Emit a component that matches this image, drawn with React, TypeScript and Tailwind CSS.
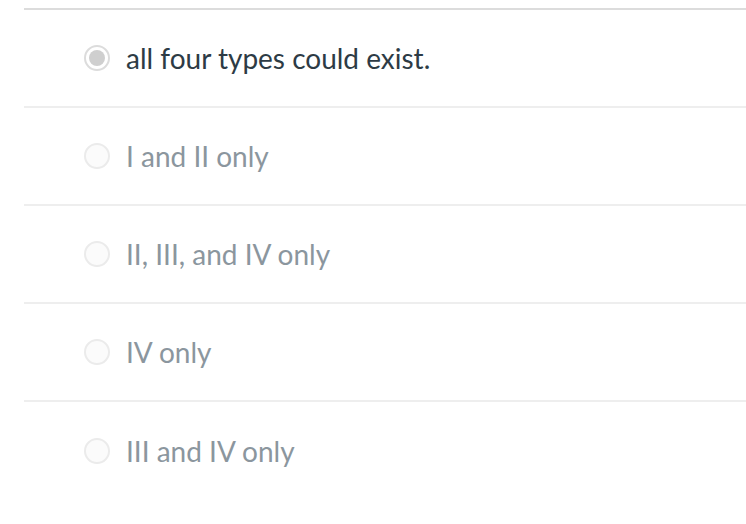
import React from "react";

const answers = [
  { label: "all four types could exist.", selected: true },
  { label: "I and II only", selected: false },
  { label: "II, III, and IV only", selected: false },
  { label: "IV only", selected: false },
  { label: "III and IV only", selected: false },
];

const Radio: React.FC<{ selected: boolean }> = ({ selected }) =>
  selected ? (
    <span className="flex h-[26px] w-[26px] shrink-0 items-center justify-center rounded-full border-2 border-[#dcdcdc] bg-white">
      <span className="h-[16px] w-[16px] rounded-full bg-[#cfcfcf]" />
    </span>
  ) : (
    <span className="h-[26px] w-[26px] shrink-0 rounded-full border-2 border-[#ebebeb] bg-[#fbfbfb]" />
  );

export default function App() {
  return (
    <div className="min-h-screen bg-white pt-2 pl-6 font-['Lato','Noto_Sans',sans-serif]">
      <div className="border-t-2 border-[#dcdcdc]">
        {answers.map((a, i) => (
          <div
            key={a.label}
            className={`flex h-[98px] items-center gap-4 pl-[60px] ${
              i < answers.length - 1 ? "border-b-2 border-[#eeeeee]" : ""
            }`}
          >
            <Radio selected={a.selected} />
            <span
              className={`text-[28px] leading-none ${
                a.selected ? "text-[#2d3b45]" : "text-[#8b969e]"
              }`}
            >
              {a.label}
            </span>
          </div>
        ))}
      </div>
    </div>
  );
}
